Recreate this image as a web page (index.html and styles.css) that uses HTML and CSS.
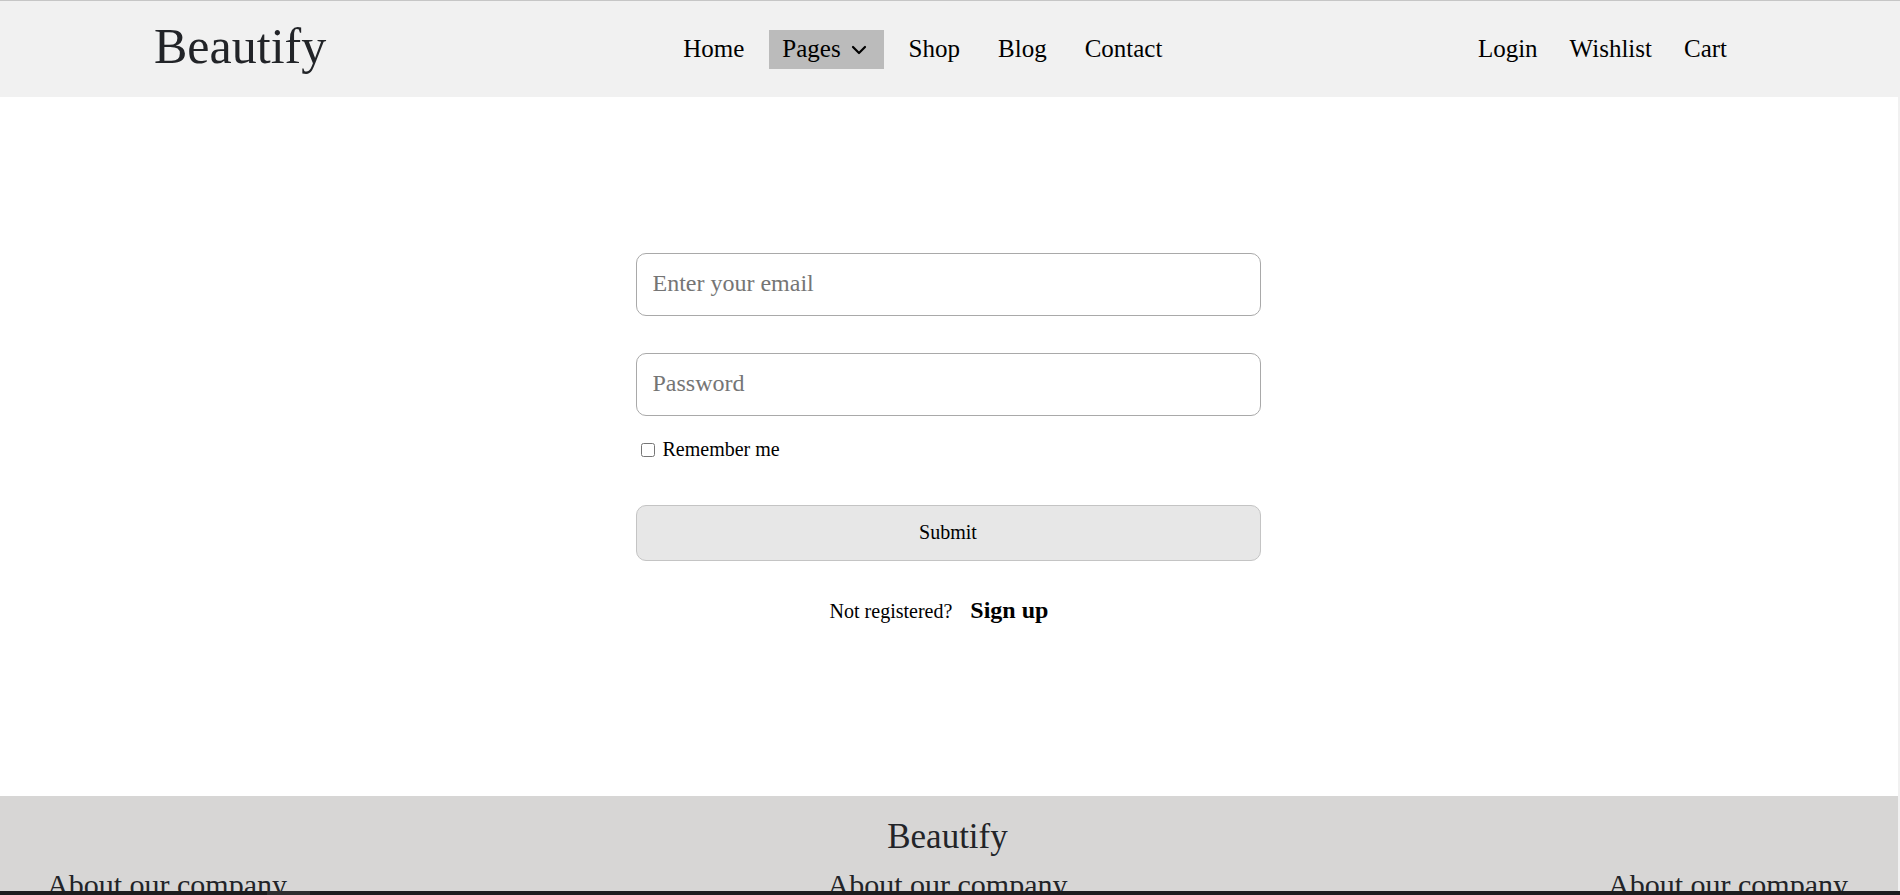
FILE: index.html
```html
<!DOCTYPE html>
<html lang="en">
<head>
<meta charset="utf-8">
<title>Beautify - Login</title>
<link rel="stylesheet" href="styles.css">
</head>
<body>
<header class="site-header">
  <a class="logo" href="#">Beautify</a>
  <nav class="main-nav">
    <a class="nav-link" href="#">Home</a>
    <a class="nav-link nav-link-active" href="#">Pages<svg class="chevron" width="16" height="10" viewBox="0 0 16 10"><path d="M2 2 L8 8 L14 2" fill="none" stroke="#000" stroke-width="2.2" stroke-linecap="round" stroke-linejoin="round"/></svg></a>
    <a class="nav-link" href="#">Shop</a>
    <a class="nav-link" href="#">Blog</a>
    <a class="nav-link" href="#">Contact</a>
  </nav>
  <nav class="user-nav">
    <a class="user-link" href="#">Login</a>
    <a class="user-link" href="#">Wishlist</a>
    <a class="user-link" href="#">Cart</a>
  </nav>
</header>

<main class="login-main">
  <form class="login-form">
    <input class="field field-email" type="email" placeholder="Enter your email">
    <input class="field field-password" type="password" placeholder="Password">
    <label class="remember"><input class="remember-box" type="checkbox"> Remember me</label>
    <button class="submit-btn" type="button">Submit</button>
    <p class="signup-row"><span class="signup-text">Not registered?</span><a class="signup-link" href="#">Sign up</a></p>
  </form>
</main>

<footer class="site-footer">
  <div class="footer-logo">Beautify</div>
  <div class="footer-cols">
    <h3 class="footer-title">About our company</h3>
    <h3 class="footer-title">About our company</h3>
    <h3 class="footer-title">About our company</h3>
  </div>
</footer>

<div class="hscroll"><div class="hscroll-thumb"></div></div>
</body>
</html>
```
FILE: styles.css
```css
html, body {
  margin: 0;
  padding: 0;
  overflow: hidden;
}
body {
  font-family: "Liberation Serif", "Times New Roman", serif;
  background: #f1f1f1;
  color: #000;
}
a {
  text-decoration: none;
  color: #000;
}

.site-header {
  box-sizing: border-box;
  height: 97px;
  border-top: 1px solid #c6c6c6;
  background: #f1f1f1;
  display: flex;
  align-items: center;
  padding: 0 173px 0 154px;
}
.logo {
  font-size: 50px;
  color: #222428;
  margin-bottom: 6px;
}
.main-nav {
  display: flex;
  align-items: center;
  gap: 12px;
  margin-left: 344px;
}
.nav-link {
  display: inline-flex;
  align-items: center;
  font-size: 25px;
  line-height: 27px;
  padding: 5px 13px 7px;
}
.nav-link-active {
  background: #bbbbbb;
  padding-right: 17px;
}
.chevron {
  margin-left: 10px;
  margin-top: 4px;
}
.user-nav {
  margin-left: auto;
  display: flex;
  gap: 32px;
  margin-bottom: 1px;
}
.user-link {
  font-size: 25px;
}

.login-main {
  background: #fff;
  margin-right: 2px;
  height: 699px;
  box-sizing: border-box;
  padding-top: 156px;
}
.login-form {
  width: 625px;
  margin: 0 auto;
  display: flex;
  flex-direction: column;
  position: relative;
  left: -1px;
}
.field {
  box-sizing: border-box;
  height: 63px;
  border: 1px solid #a9a9a9;
  border-radius: 10px;
  padding: 0 16px 2px;
  font-family: "Liberation Serif", "Times New Roman", serif;
  font-size: 24px;
  color: #000;
  background: #fff;
  outline: none;
}
.field::placeholder {
  color: #757575;
}
.field-password {
  margin-top: 37px;
}
.remember {
  display: flex;
  align-items: center;
  margin-top: 22px;
  font-size: 20px;
  line-height: 22px;
}
.remember-box {
  width: 14px;
  height: 14px;
  margin: 2px 8px 0 5px;
}
.submit-btn {
  margin-top: 45px;
  height: 56px;
  box-sizing: border-box;
  border: 1px solid #c4c4c4;
  border-radius: 10px;
  background: #e7e7e7;
  font-family: "Liberation Serif", "Times New Roman", serif;
  font-size: 20px;
  color: #000;
  padding: 0 0 2px;
}
.signup-row {
  margin: 36px 0 0;
  display: flex;
  justify-content: center;
  align-items: baseline;
}
.signup-text {
  font-size: 20px;
}
.signup-link {
  font-size: 24px;
  font-weight: bold;
  padding: 0 18px;
}

.site-footer {
  background: #d7d6d5;
  margin-right: 2px;
  padding: 21px 50px 40px 47px;
  color: #222428;
}
.footer-logo {
  text-align: center;
  font-size: 35px;
}
.footer-cols {
  display: flex;
  justify-content: space-between;
  margin-top: 11px;
}
.footer-title {
  margin: 0;
  font-size: 30px;
  font-weight: normal;
}

.hscroll {
  position: fixed;
  left: 0;
  right: 0;
  bottom: 0;
  height: 4px;
  background: #1c1c1e;
}
.hscroll-thumb {
  position: absolute;
  left: 267px;
  top: 0;
  width: 43px;
  height: 4px;
  background: #2e2e30;
}
```
